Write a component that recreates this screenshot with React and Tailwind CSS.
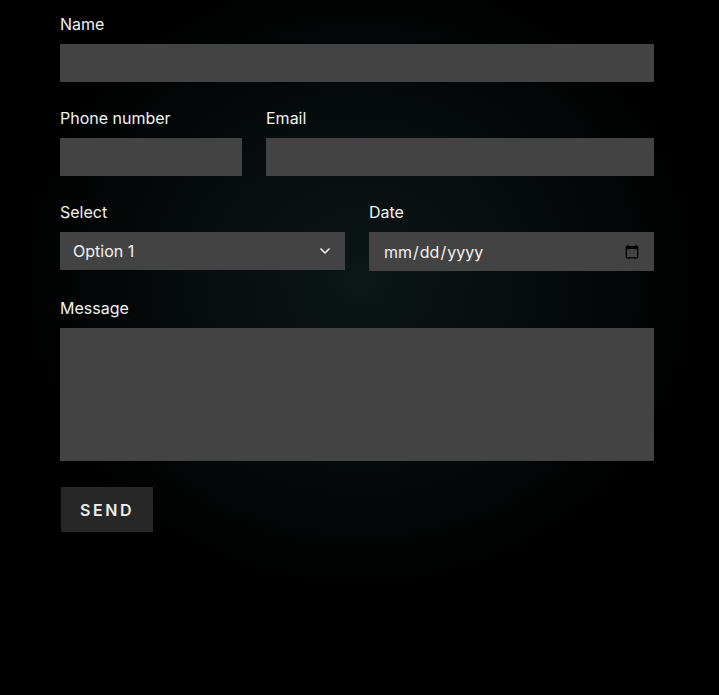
import { ChevronDown } from 'lucide-react';

const field = 'block w-full h-[38px] bg-[#434343] text-[#f2f2f2] px-[13px] text-base outline-none border-0 rounded-none';
const label = 'block text-base leading-6 text-[#f2f2f2] mb-2';

export default function App() {
  return (
    <div className="min-h-[695px] bg-black bg-[radial-gradient(ellipse_350px_320px_at_360px_280px,#0c1617_0%,#070d0e_45%,#000_100%)] font-['Inter','Noto_Sans',sans-serif]">
      <form className="w-[594px] ml-[60px] pt-3" onSubmit={(e) => e.preventDefault()}>
        <div>
          <label className={label}>Name</label>
          <input type="text" className={field} />
        </div>

        <div className="flex gap-6 mt-6">
          <div className="w-[182px]">
            <label className={label}>Phone number</label>
            <input type="tel" className={field} />
          </div>
          <div className="flex-1">
            <label className={label}>Email</label>
            <input type="email" className={field} />
          </div>
        </div>

        <div className="flex gap-6 mt-6">
          <div className="flex-1">
            <label className={label}>Select</label>
            <div className="relative">
              <select className={`${field} appearance-none`} defaultValue="1">
                <option value="1">Option 1</option>
                <option value="2">Option 2</option>
                <option value="3">Option 3</option>
              </select>
              <ChevronDown size={16} strokeWidth={2.5} className="absolute right-[12px] top-[11px] text-[#f2f2f2] pointer-events-none" />
            </div>
          </div>
          <div className="flex-1">
            <label className={label}>Date</label>
            <input type="date" className={`${field} h-[39px] pl-[14px] pr-[12px]`} />
          </div>
        </div>

        <div className="mt-[25px]">
          <label className={label}>Message</label>
          <textarea className={`${field} h-[133px] resize-none py-2`} />
        </div>

        <button type="submit" className="mt-[26px] ml-px w-[92px] h-[45px] bg-[#272727] text-[#eeeeee] text-base font-semibold tracking-[0.16em]">
          SEND
        </button>
      </form>
    </div>
  );
}
